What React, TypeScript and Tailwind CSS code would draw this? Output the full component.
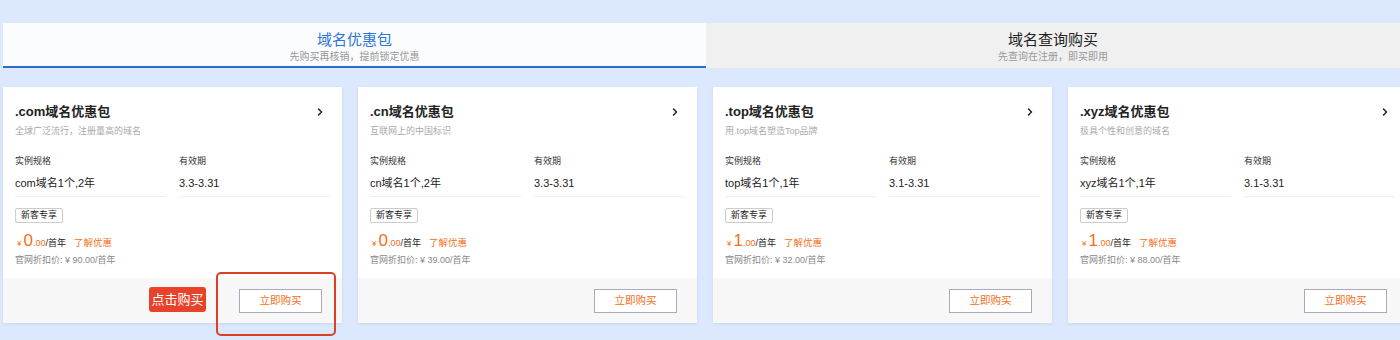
import React from 'react';
import { ChevronRight } from 'lucide-react';

type Pack = {
  name: string;
  desc: string;
  spec: string;
  period: string;
  price: string;
  original: string;
};

const PACKS: Pack[] = [
  { name: '.com域名优惠包', desc: '全球广泛流行，注册量高的域名', spec: 'com域名1个,2年', period: '3.3-3.31', price: '0', original: '90.00' },
  { name: '.cn域名优惠包', desc: '互联网上的中国标识', spec: 'cn域名1个,2年', period: '3.3-3.31', price: '0', original: '39.00' },
  { name: '.top域名优惠包', desc: '用.top域名塑造Top品牌', spec: 'top域名1个,1年', period: '3.1-3.31', price: '1', original: '32.00' },
  { name: '.xyz域名优惠包', desc: '极具个性和创意的域名', spec: 'xyz域名1个,1年', period: '3.1-3.31', price: '1', original: '88.00' },
];

const FONT = "font-['Liberation_Sans','Noto_Sans_CJK_SC',sans-serif]";

function Tab({ title, sub, active }: { title: string; sub: string; active?: boolean }) {
  return (
    <div
      className={
        active
          ? 'w-[703px] shrink-0 h-[45px] bg-[#fbfcfd] border-b-2 border-[#2f6dc4] flex flex-col items-center pt-[7px]'
          : 'flex-1 h-[45px] bg-[#f0f0f0] flex flex-col items-center pt-[7px]'
      }
    >
      <span className={`text-[15px] leading-[20px] ${active ? 'text-[#2f74d8]' : 'text-[#222]'}`}>{title}</span>
      <span className="text-[10px] leading-[14px] text-[#999]">{sub}</span>
    </div>
  );
}

function PackCard({ pack, highlight }: { pack: Pack; highlight?: boolean }) {
  return (
    <div className="relative w-[339px] shrink-0 bg-white shadow-[0_1px_3px_rgba(0,0,0,0.08)]">
      <div className="h-[191px] pl-[12px] pr-[12px] pt-[15px]">
        <div className="flex items-center justify-between">
          <span className="text-[13px] leading-[20px] font-bold text-[#222]">{pack.name}</span>
          <ChevronRight size={12} strokeWidth={3} className="text-[#222] mr-[4px]" />
        </div>
        <div className="mt-[2px] text-[9px] leading-[14px] text-[#aaa]">{pack.desc}</div>
        <div className="mt-[16px] grid grid-cols-2 gap-x-[13px]">
          <div className="border-b border-[#eee] pb-[5px]">
            <div className="text-[9px] leading-[14px] text-[#333]">实例规格</div>
            <div className="mt-[7px] text-[11px] leading-[16px] text-[#222]">{pack.spec}</div>
          </div>
          <div className="border-b border-[#eee] pb-[5px]">
            <div className="text-[9px] leading-[14px] text-[#333]">有效期</div>
            <div className="mt-[7px] text-[11px] leading-[16px] text-[#222]">{pack.period}</div>
          </div>
        </div>
        <div className="mt-[11px] inline-flex h-[15px] items-center border border-[#ccc] rounded-[2px] px-[5px] text-[9px] text-[#222]">
          新客专享
        </div>
        <div className="mt-[5px] flex items-baseline h-[21px]">
          <span className="text-[8px] text-[#f36f21] ml-[2px]">¥</span>
          <span className="text-[17px] leading-[21px] text-[#f36f21] ml-[2px]">{pack.price}</span>
          <span className="text-[9px] text-[#f36f21]">.00</span>
          <span className="text-[9px] text-[#222]">/首年</span>
          <span className="ml-[8px] text-[9.5px] text-[#f36f21]">了解优惠</span>
        </div>
        <div className="mt-[2px] text-[9px] leading-[14px] text-[#888]">官网折扣价: ¥ {pack.original}/首年</div>
      </div>
      <div className="h-[45px] bg-[#f7f7f7] flex items-center justify-end pr-[20px]">
        <button className="w-[83px] h-[24px] border border-[#aab] bg-white text-[10.5px] text-[#f36f21]">
          立即购买
        </button>
      </div>
      {highlight && (
        <>
          <div className="absolute left-[146px] top-[200px] w-[57px] h-[25px] rounded-[3px] bg-[#e8432a] text-white text-[13px] flex items-center justify-center">
            点击购买
          </div>
          <div className="absolute left-[213px] top-[185px] w-[120px] h-[64px] rounded-[5px] border-2 border-[#dc3f24]" />
        </>
      )}
    </div>
  );
}

export default function App() {
  return (
    <div className={`w-[1400px] h-[340px] overflow-hidden bg-[#dbe8fd] pt-[23px] ${FONT}`}>
      <div className="flex pl-[3px]">
        <Tab title="域名优惠包" sub="先购买再核销，提前锁定优惠" active />
        <Tab title="域名查询购买" sub="先查询在注册，即买即用" />
      </div>
      <div className="mt-[19px] flex gap-[16px] pl-[3px]">
        {PACKS.map((p, i) => (
          <PackCard key={p.name} pack={p} highlight={i === 0} />
        ))}
      </div>
    </div>
  );
}
